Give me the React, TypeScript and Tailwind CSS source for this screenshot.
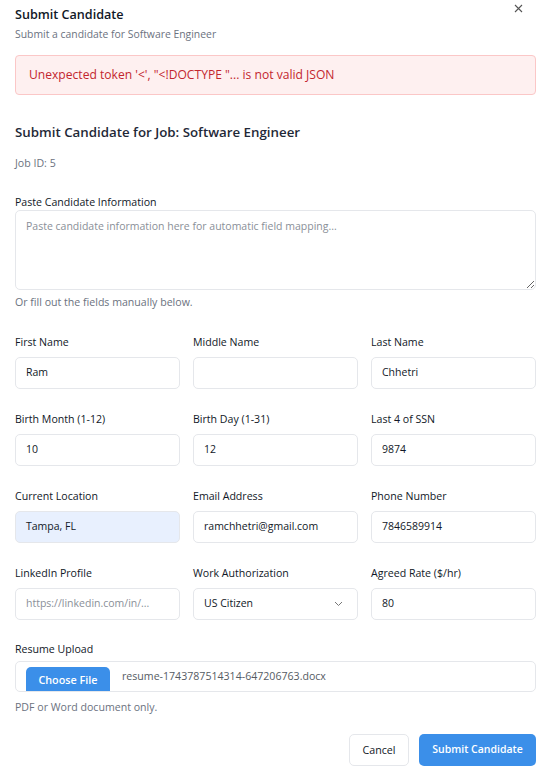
import React from "react";

const font = { fontFamily: '"Segoe UI", "Open Sans", "Noto Sans", sans-serif' };

function Label({ children }: { children: React.ReactNode }) {
  return <div className="text-[10.6px] leading-[16px] font-medium text-[#111827] mb-[7px]">{children}</div>;
}

function Input({ value, placeholder, autofill }: { value?: string; placeholder?: string; autofill?: boolean }) {
  return (
    <div
      className={`h-[32px] rounded-[5px] border border-[#e5e7eb] flex items-center px-[10px] text-[10.5px] ${
        autofill ? "bg-[#e8f0fe]" : "bg-white"
      }`}
    >
      {value ? (
        <span className="text-[#111827]">{value}</span>
      ) : (
        <span className="text-[#8a8f98]">{placeholder ?? ""}</span>
      )}
    </div>
  );
}

function Field({ label, value, placeholder, autofill }: { label: string; value?: string; placeholder?: string; autofill?: boolean }) {
  return (
    <div>
      <Label>{label}</Label>
      <Input value={value} placeholder={placeholder} autofill={autofill} />
    </div>
  );
}

export default function App() {
  return (
    <div className="relative w-[551px] h-[782px] bg-white overflow-hidden" style={font}>
      <button className="absolute right-[26px] top-[2px] text-[#555] p-[2px]">
        <svg width="9" height="9" viewBox="0 0 9 9" fill="none" stroke="#555" strokeWidth="1.1">
          <path d="M1 1L8 8M8 1L1 8" />
        </svg>
      </button>
      <div className="px-[15px] pt-[5px]">
        <div className="text-[12.6px] leading-[20px] font-semibold text-[#111827]">Submit Candidate</div>
        <div className="mt-[1px] text-[10.4px] leading-[16px] text-[#6b7280]">Submit a candidate for Software Engineer</div>

        <div className="mt-[13px] rounded-[4px] border border-[#fbc7c7] bg-[#fef0f0] px-[13px] py-[9px] text-[12.1px] leading-[20px] text-[#c3262e]">
          Unexpected token '&lt;', "&lt;!DOCTYPE "... is not valid JSON
        </div>

        <div className="mt-[25px] text-[13.3px] leading-[24px] font-semibold text-[#1f2937]">
          Submit Candidate for Job: Software Engineer
        </div>
        <div className="mt-[11px] text-[10.6px] leading-[16px] text-[#6b7280]">Job ID: 5</div>

        <div className="mt-[23px] text-[10.6px] leading-[16px] font-medium text-[#111827]">Paste Candidate Information</div>
        <textarea
          className="block w-full h-[80px] rounded-[5px] border border-[#e5e7eb] px-[10px] py-[6px] text-[10.5px] leading-[18px] outline-none resize-y placeholder:text-[#8a8f98]"
          style={font}
          placeholder="Paste candidate information here for automatic field mapping..."
        />
        <div className="mt-[4px] text-[10.6px] leading-[16px] text-[#6b7280]">Or fill out the fields manually below.</div>

        <div className="mt-[24px] grid grid-cols-3 gap-x-[13px] gap-y-[22px]">
          <Field label="First Name" value="Ram" />
          <Field label="Middle Name" />
          <Field label="Last Name" value="Chhetri" />
          <Field label="Birth Month (1-12)" value="10" />
          <Field label="Birth Day (1-31)" value="12" />
          <Field label="Last 4 of SSN" value="9874" />
          <Field label="Current Location" value="Tampa, FL" autofill />
          <Field label="Email Address" value="ramchhetri@gmail.com" />
          <Field label="Phone Number" value="7846589914" />
          <Field label="LinkedIn Profile" placeholder="https://linkedin.com/in/..." />
          <div>
            <Label>Work Authorization</Label>
            <div className="h-[32px] rounded-[5px] border border-[#e5e7eb] flex items-center justify-between pl-[10px] pr-[14px] text-[10.5px] bg-white">
              <span className="text-[#111827]">US Citizen</span>
              <svg width="9" height="6" viewBox="0 0 9 6" fill="none" stroke="#777" strokeWidth="1">
                <path d="M1 1l3.5 3.5L8 1" />
              </svg>
            </div>
          </div>
          <Field label="Agreed Rate ($/hr)" value="80" />
        </div>

        <div className="mt-[21px] text-[10.6px] leading-[16px] font-medium text-[#111827]">Resume Upload</div>
        <div className="mt-[4px] h-[31px] rounded-[5px] border border-[#e5e7eb] flex items-end overflow-hidden pl-[10px]">
          <div className="h-[24px] w-[84px] rounded-t-[5px] bg-[#3b8fe9] text-white text-[10.8px] font-semibold flex items-center justify-center pt-[3px]">
            Choose File
          </div>
          <div className="ml-[12px] self-center text-[10.6px] text-[#555b63]">resume-1743787514314-647206763.docx</div>
        </div>
        <div className="mt-[7px] text-[10.6px] leading-[16px] text-[#6b7280]">PDF or Word document only.</div>

        <div className="mt-[19px] flex justify-end gap-[10px]">
          <button className="h-[32px] w-[60px] rounded-[5px] border border-[#e5e7eb] bg-white text-[10.7px] text-[#111827]" style={font}>
            Cancel
          </button>
          <button className="h-[32px] w-[117px] rounded-[5px] bg-[#3b8fe9] text-[10.5px] font-semibold text-white" style={font}>
            Submit Candidate
          </button>
        </div>
      </div>
    </div>
  );
}
